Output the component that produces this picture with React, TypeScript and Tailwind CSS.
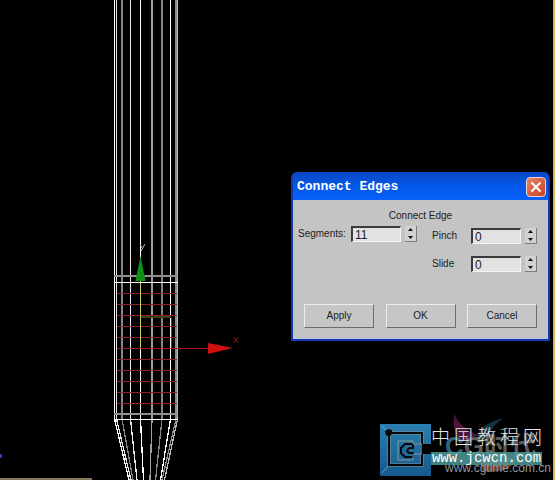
import { useState } from 'react'

interface SpinnerProps {
  id: string
  label: string
  value: number
  onChange: (value: number) => void
}

// [x of the shaft edge, x where its taper ends, width, colour]
const edges: [number, number, number, string][] = [
  [114.5, 129, 1, '#ffffff'],
  [116.5, 131, 1, '#e4e4e4'],
  [122, 133, 2, '#858585'],
  [130.5, 137, 1, '#e8e8e8'],
  [140.5, 143.5, 1, '#ffffff'],
  [152, 150, 2, '#a0a0a0'],
  [162, 155.5, 2, '#858585'],
  [170.5, 160.5, 1, '#ffffff'],
  [176, 162, 2, '#8c8c8c'],
  [177.5, 164.5, 1, '#b8b8b8'],
]

const loops = [293, 304, 315, 326, 337, 348, 359, 370, 381, 392, 403]

function Mesh() {
  return (
    <svg className="block" width="260" height="480" viewBox="0 0 260 480" aria-hidden="true">
      {edges.map(([x, end, width, color]) => (
        <g key={x} stroke={color}>
          <path d={`M${x} 0V419`} strokeWidth={width} />
          <path d={`M${x} 419L${end} 480`} strokeWidth="1.3" shapeRendering="crispEdges" />
        </g>
      ))}
      <path d="M114 276H178M114 414H178" stroke="#909090" strokeWidth="2" />
      <path d="M114 282.5H178M114 419.5H178" stroke="#ffffff" />
      {loops.map((y) => (
        <path key={y} d={`M117 ${y + 0.5}H177`} stroke="#8d1f26" />
      ))}
      <path d="M140.5 280V348" stroke="#c9c86a" />
      <path d="M141 317H171" stroke="#3c4216" strokeWidth="2" />
      <path d="M171.5 318V348" stroke="#a01820" />
      <path d="M140 348.5H210" stroke="#b51219" />
      <path d="M208 343L233 348L208 354Z" fill="#cf1111" />
      <path d="M140.5 256L145.5 281H135.500Z" fill="#0d9212" />
      <path d="M140 244L142 248M145 244L141 251" stroke="#cdbb8c" fill="none" />
      <path d="M234 337L238 343M238 337L234 343" stroke="#8e1313" fill="none" />
    </svg>
  )
}

function Spinner({ id, label, value, onChange }: SpinnerProps) {
  return (
    <div className="flex items-center justify-between">
      <label htmlFor={id}>{label}</label>
      <div className="flex items-center gap-1">
        <input
          id={id}
          type="text"
          value={value}
          onChange={(e) => onChange(Number(e.target.value) || 0)}
          className="h-4 w-[50px] border-t-2 border-l-2 border-r border-b border-t-[#3a3a3a] border-l-[#3a3a3a] border-r-[#f4f4f4] border-b-[#f4f4f4] bg-[#e2e2e2] pl-0.5 text-xs leading-3 outline-none"
        />
        <div className="flex h-4 w-3 flex-col border-r border-b border-[#7c7c7c] bg-[#d2d2d2]">
          <button
            type="button"
            aria-label={`Increase ${label}`}
            onClick={() => onChange(value + 1)}
            className="flex flex-1 items-center justify-center"
          >
            <svg width="5" height="3" viewBox="0 0 5 3"><path d="M0 3L2.500 0L5 3Z" fill="#111" /></svg>
          </button>
          <button
            type="button"
            aria-label={`Decrease ${label}`}
            onClick={() => onChange(value - 1)}
            className="flex flex-1 items-center justify-center"
          >
            <svg width="5" height="3" viewBox="0 0 5 3"><path d="M0 0H5L2.500 3Z" fill="#111" /></svg>
          </button>
        </div>
      </div>
    </div>
  )
}

function ConnectEdgesDialog() {
  const [segments, setSegments] = useState(11)
  const [pinch, setPinch] = useState(0)
  const [slide, setSlide] = useState(0)

  return (
    <section
      role="dialog"
      aria-labelledby="dialog-title"
      className="absolute top-[172px] right-[3px] w-[259px] rounded-t-md border-2 border-t-0 border-[#1238b4] bg-[#0a55e4]"
    >
      <header className="flex h-7 items-center justify-between rounded-t-md bg-linear-to-b from-[#0a48c4] via-[#0458e8] to-[#0660fa] pt-0.5 pr-0.5 pl-1">
        <h1
          id="dialog-title"
          className="font-['Liberation_Mono',monospace] text-[13px] font-bold text-white"
        >
          Connect Edges
        </h1>
        <button
          type="button"
          aria-label="Close"
          className="flex size-5 items-center justify-center rounded-sm border border-[#f0d8d0] bg-linear-to-br from-[#e48468] to-[#c93c1c]"
        >
          <svg width="12" height="12" viewBox="0 0 12 12">
            <path d="M1.500 1.500L10.500 10.500M10.500 1.500L1.500 10.500" stroke="#fff" strokeWidth="2" />
          </svg>
        </button>
      </header>

      <form
        onSubmit={(e) => e.preventDefault()}
        className="border border-t-0 border-[#b9c4e0] bg-[#c4c4c4] pt-2 pr-2.5 pb-2.5 pl-1 text-[10px] leading-4 text-[#1c1c1c]"
      >
        <h2 className="pl-1.5 text-center">Connect Edge</h2>
        <div className="flex justify-between">
          <div className="w-[119px] pt-0.5">
            <Spinner id="segments" label="Segments:" value={segments} onChange={setSegments} />
          </div>
          <div className="flex w-[105px] flex-col gap-3 pt-1">
            <Spinner id="pinch" label="Pinch" value={pinch} onChange={setPinch} />
            <Spinner id="slide" label="Slide" value={slide} onChange={setSlide} />
          </div>
        </div>
        <div className="mt-8 flex justify-between pl-1.5">
          {['Apply', 'OK', 'Cancel'].map((name) => (
            <button
              key={name}
              type="button"
              className="h-6 w-[70px] border border-t-[#ececec] border-r-[#6c6c6c] border-b-[#6c6c6c] border-l-[#ececec] bg-[#c6c6c6]"
            >
              {name}
            </button>
          ))}
        </div>
      </form>
    </section>
  )
}

function Watermark() {
  return (
    <div className="absolute right-0 bottom-1 flex h-[52px] w-[173px] items-start">
      <svg className="shrink-0" width="51" height="52" viewBox="0 0 51 52" aria-hidden="true">
        <defs>
          <linearGradient id="logo-blue" x1="0" y1="0" x2="0" y2="1">
            <stop offset="0" stopColor="#2a7fae" />
            <stop offset="1" stopColor="#155a8c" />
          </linearGradient>
        </defs>
        <path d="M0 0H51V20H42V30H51V52H0Z" fill="url(#logo-blue)" />
        <path d="M2 2L9 9M9 41L2 49" stroke="#6ba0bd" strokeWidth="1" />
        <g fill="none">
          <path d="M42 20V9H9V41H42V30" stroke="#8a9296" strokeWidth="3" />
          <path d="M42 20V9H9V41H42V30" stroke="#07090b" strokeWidth="2" />
          <path d="M33 20H25L21 24V29L25 33H33V29H29L27 27L29 24H33Z" stroke="#07090b" strokeWidth="2" />
          <path d="M42 20H33V17H18V36H33V30H42" stroke="#8a9296" strokeWidth="1" />
        </g>
        <path d="M5 7L8 5L12 6L12 10L9 13L6 11Z" fill="#07090b" />
      </svg>
      <svg className="absolute top-[-10px] left-[60px]" width="90" height="62" viewBox="0 0 90 62" aria-hidden="true">
        <path d="M14 0Q20 14 38 21L20 29Q12 16 14 0Z" fill="#4b153c" />
        <path d="M64 4Q40 9 35 26L48 25Q50 12 64 4Z" fill="#12343c" />
        <path d="M38 45Q58 38 76 46Q68 60 43 57Z" fill="#6e4020" />
      </svg>
      <p className="absolute top-2 left-[65px] font-['Liberation_Sans','Noto_Sans_CJK_SC',sans-serif] text-[26px] leading-7 font-bold whitespace-nowrap text-[#5c5c5c]">
        <span className="text-[#2f6680]">C</span>G时代
      </p>
      <div className="relative w-[111px]">
        <p className="flex justify-between font-['Noto_Sans_CJK_SC',sans-serif] text-[19px] leading-6 font-light text-[#e4e4e4]">
          {['中', '国', '教', '程', '网'].map((char) => (
            <span key={char}>{char}</span>
          ))}
        </p>
        <p className="mt-1 h-[13px] bg-[#4d9a9a]/85 text-center font-['Liberation_Mono',monospace] text-sm leading-[13px] text-white">
          www.jcwcn.com
        </p>
      </div>
      <p className="absolute right-0.5 bottom-0.5 font-['Liberation_Sans',sans-serif] text-xs leading-3 text-[#8e989c]">
        www.cgtime.com.cn
      </p>
    </div>
  )
}

export default function App() {
  return (
    <main className="relative min-h-screen overflow-hidden border-r-2 border-[#cdb558] bg-black font-['Liberation_Sans',Arial,sans-serif]">
      <Mesh />
      <div className="absolute bottom-0 left-0 h-0.5 w-[92px] bg-[#82765a]" />
      <div className="absolute bottom-[22px] left-0 h-1 w-0.5 bg-[#3434b0]" />
      <ConnectEdgesDialog />
      <Watermark />
    </main>
  )
}
